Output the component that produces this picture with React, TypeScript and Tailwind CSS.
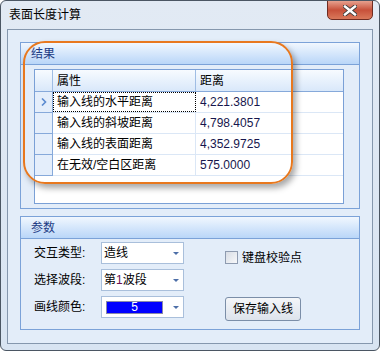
import React from 'react';

type Row = { name: string; value: string };

const rows: Row[] = [
  { name: '输入线的水平距离', value: '4,221.3801' },
  { name: '输入线的斜坡距离', value: '4,798.4057' },
  { name: '输入线的表面距离', value: '4,352.9725' },
  { name: '在无效/空白区距离', value: '575.0000' },
];

const GroupHeader: React.FC<{ title: string }> = ({ title }) => (
  <div className="h-[22px] flex items-center pl-[10px] border-b border-[#7ba2d8] bg-gradient-to-b from-[#f1f7fe] to-[#b9d6f8] text-[#1d3c85] text-[12px]">
    {title}
  </div>
);

const Combo: React.FC<{ children: React.ReactNode }> = ({ children }) => (
  <div className="w-[83px] h-[22px] flex items-center border border-[#a9bfdb] bg-white pl-[2px] pr-[4px]">
    <div className="flex-1 flex items-center">{children}</div>
    <span className="w-0 h-0 border-l-[3px] border-r-[3px] border-t-[3px] border-l-transparent border-r-transparent border-t-[#4d6fa8]" />
  </div>
);

export default function App() {
  return (
    <div className="relative w-[380px] h-[351px] rounded-[6px] border border-[#4b5663] bg-gradient-to-b from-[#e2eaf4] to-[#d8e4f2] font-['Liberation_Sans','Noto_Sans_CJK_SC',sans-serif] text-[12px] text-black leading-none overflow-hidden">
      {/* 标题栏 */}
      <div className="h-[28px] flex items-center pl-[8px] text-[12px] text-black">表面长度计算</div>
      <div className="absolute top-[-1px] right-[6px] w-[46px] h-[20px] rounded-b-[5px] border border-[#6e2c22] bg-gradient-to-b from-[#e6a08e] via-[#c7503a] to-[#d9785a] flex items-center justify-center">
        <svg width="14" height="11" viewBox="0 0 14 11">
          <path d="M2 1.5 L12 9.5 M12 1.5 L2 9.5" stroke="#3a3a3a" strokeWidth="4.2" strokeLinecap="square" />
          <path d="M2 1.5 L12 9.5 M12 1.5 L2 9.5" stroke="#ffffff" strokeWidth="2.4" strokeLinecap="square" />
        </svg>
      </div>

      {/* 客户区 */}
      <div className="mx-[6px] h-[315px] border border-[#8597ad] bg-[#e3edf9] px-[12px] pt-[12px] flex flex-col gap-[7px]">
        <div className="h-[167px] border border-[#7ba2d8] flex flex-col">
          <GroupHeader title="结果" />
          <div className="ml-[13px] mr-[15px] mt-[4px] h-[135px] border border-[#7aa0d6] bg-white flex flex-col">
            <div className="h-[22px] flex border-b border-[#86a9da] bg-gradient-to-b from-[#f7fbff] to-[#d9e8fa]">
              <div className="w-[18px] border-r border-[#9fbde4]" />
              <div className="w-[143px] flex items-center pl-[4px] border-r border-[#9fbde4]">属性</div>
              <div className="flex-1 flex items-center pl-[4px]">距离</div>
            </div>
            {rows.map((r, i) => (
              <div key={r.name} className="h-[21px] flex border-b border-[#dbe7f6]">
                <div className="w-[18px] flex items-center justify-center border-r border-b border-[#86a9da] bg-[#e4eefb] -mb-px">
                  {i === 0 && (
                    <svg width="6" height="8" viewBox="0 0 6 8">
                      <path d="M1 0.5 L4.5 4 L1 7.5" fill="none" stroke="#5b8bd0" strokeWidth="1.6" />
                    </svg>
                  )}
                </div>
                <div
                  className={
                    i === 0
                      ? 'w-[143px] flex items-center pl-[3px] border border-dotted border-black'
                      : 'w-[143px] flex items-center pl-[4px] border-r border-[#dbe7f6]'
                  }
                >
                  {r.name}
                </div>
                <div className="flex-1 flex items-center pl-[4px] text-[#16164d]">{r.value}</div>
              </div>
            ))}
          </div>
        </div>

        <div className="h-[114px] border border-[#7ba2d8] flex flex-col">
          <GroupHeader title="参数" />
          <div className="flex pt-[3px]">
            <div className="pl-[13px] flex flex-col gap-[5px]">
              <div className="flex items-center">
                <span className="w-[67px]">交互类型:</span>
                <Combo>造线</Combo>
              </div>
              <div className="flex items-center">
                <span className="w-[67px]">选择波段:</span>
                <Combo>
                  第<span className="text-[#6a0f4f]">1</span>波段
                </Combo>
              </div>
              <div className="flex items-center">
                <span className="w-[67px]">画线颜色:</span>
                <Combo>
                  <div className="ml-[2px] w-[57px] h-[13px] bg-[#0000ff] border border-[#8a8aa8] flex items-center justify-center text-white text-[12px]">
                    5
                  </div>
                </Combo>
              </div>
            </div>
            <div className="ml-[41px] flex flex-col">
              <div className="mt-[9px] flex items-center gap-[4px]">
                <span className="w-[13px] h-[13px] border border-[#8e9bb0] bg-gradient-to-br from-[#d8dde5] to-[#f7f8fa]" />
                <span>键盘校验点</span>
              </div>
              <div className="mt-[33px] w-[76px] h-[24px] rounded-[3px] border border-[#7b8ea8] bg-gradient-to-b from-[#f4f6f9] to-[#dde3ec] flex items-center justify-center">
                保存输入线
              </div>
            </div>
          </div>
        </div>
      </div>

      {/* 橙色标注框 */}
      <div className="absolute left-[22px] top-[40px] w-[270px] h-[143px] rounded-[22px] border-2 border-[#e8781e] shadow-[3px_4px_6px_rgba(0,0,0,0.35)]" />
    </div>
  );
}
